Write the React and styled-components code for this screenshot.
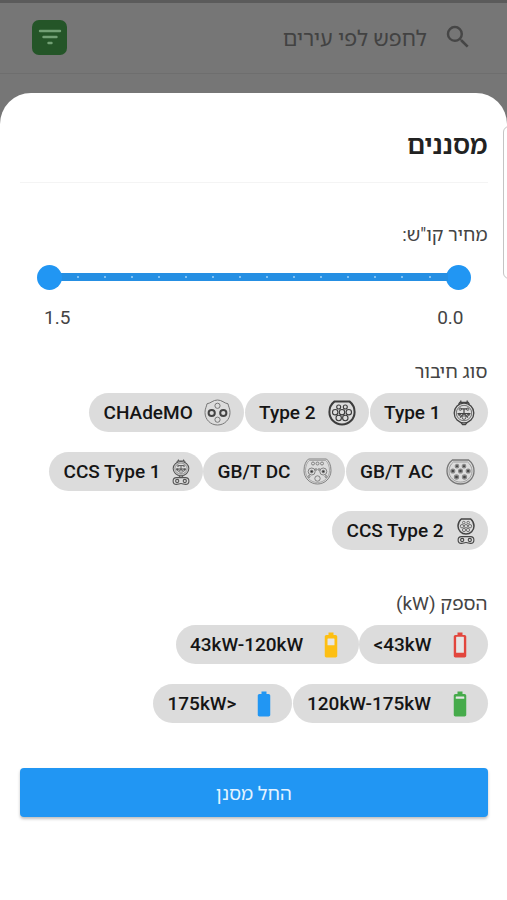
import React from "react";
import styled, { createGlobalStyle } from "styled-components";

const GlobalStyle = createGlobalStyle`
  * {
    box-sizing: border-box;
  }
  body {
    margin: 0;
    background: #767676;
    font-family: Roboto, "Noto Sans Hebrew", "Noto Sans", "Open Sans", sans-serif;
    color: #444;
  }
`;

const ticks = Array.from({ length: 14 }, (_, i) => i);

const Pin = ({ x, y, r = 2.2, fill = "none" }) => (
  <circle cx={x} cy={y} r={r} fill={fill} />
);

const Type1Face = () => (
  <>
    <circle cx="11" cy="14" r="9.8" strokeWidth="1.3" />
    <circle cx="11" cy="14" r="7.7" strokeWidth="0.7" />
    <path d="M5.500 5.500l1.300-2.200h8.400l1.300 2.200M7.800 3.300V1.500M14.200 3.300V1.500M8 23.500l1.600 2h2.800l1.600-2" strokeWidth="1.300" />
    <path d="M7.500 9.800h7M11 9.800v4.700M4.500 14.500h13M11 14.500l-4 4M11 14.500l4 4" strokeWidth="1.200" />
    <g strokeWidth=".8">
      <Pin x={7.3} y={10.2} r={1.2} />
      <Pin x={14.7} y={10.2} r={1.2} />
      <Pin x={6.5} y={15.5} r={1.100} fill="#555" />
      <Pin x={15.5} y={15.5} r={1.100} fill="#555" />
      <Pin x={11} y={18.6} r={1.8} fill="#dcdcdc" />
    </g>
  </>
);

const Type1Icon = () => (
  <svg width="22" height="27" viewBox="0 0 22 27" fill="none" stroke="#444">
    <Type1Face />
  </svg>
);

const Type2Icon = () => (
  <svg width="28" height="26" viewBox="0 0 28 26" fill="none" stroke="#3c3c3c">
    <path d="M6.6 1.4h14.8c3.3 2.6 5.2 6.4 5.2 10.5 0 7-5.6 12.6-12.6 12.6S1.4 18.9 1.4 11.9c0-4.1 1.9-7.9 5.2-10.5z" strokeWidth="2" />
    <g strokeWidth="1.1">
      <Pin x={10.7} y={7} r={2} />
      <Pin x={17.3} y={7} r={2} />
      <Pin x={7.2} y={12.2} r={2.7} />
      <Pin x={14} y={12.2} r={2.7} />
      <Pin x={20.8} y={12.2} r={2.7} />
      <Pin x={10.7} y={18} r={2.7} />
      <Pin x={17.3} y={18} r={2.7} />
    </g>
  </svg>
);

const ChademoIcon = () => (
  <svg width="27" height="27" viewBox="0 0 27 27" fill="none" stroke="#777" strokeWidth="1">
    <path d="M3 4.800C7 4.200 9 1 13.500 1S20 4.200 24 4.800c.5 3 2 4.700 2 8.700C26 20.500 20.500 26 13.500 26S1 20.500 1 13.500c0-4 1.500-5.700 2-8.700z" />
    <Pin x={13.5} y={6.8} r={2.6} />
    <Pin x={13.5} y={20.7} r={2.6} />
    <g stroke="#444" strokeWidth="2">
      <Pin x={7.7} y={14} r={3.1} />
      <Pin x={19.3} y={14} r={3.1} />
    </g>
  </svg>
);

const GbtAcIcon = () => (
  <svg width="29" height="26" viewBox="0 0 29 26" fill="none" stroke="#777">
    <path d="M6.4 1h16.2c3.4 2.6 5.4 6.6 5.4 11 0 7.3-6 13-13.5 13S1 19.3 1 12C1 7.6 3 3.6 6.4 1z" strokeWidth="1.3" />
    <path d="M7.4 3h14.2c2.8 2.2 4.4 5.5 4.4 9.1 0 6.2-5.2 11-11.5 11S3 18.3 3 12.1C3 8.5 4.6 5.2 7.4 3z" strokeWidth=".6" />
    <g strokeWidth="1.300" stroke="#8a8a8a">
      <Pin x={11} y={7.200} r={1.700} fill="#444" />
      <Pin x={18} y={7.200} r={1.700} fill="#444" />
      <Pin x={6.8} y={12} r={1.900} fill="#444" />
      <Pin x={14.5} y={12} r={1.900} fill="#444" />
      <Pin x={22.2} y={12} r={1.900} fill="#444" />
      <Pin x={10.5} y={18} r={2} fill="#444" />
      <Pin x={18.5} y={18} r={2} fill="#444" />
    </g>
  </svg>
);

const GbtDcIcon = () => (
  <svg width="29" height="27" viewBox="0 0 29 27" fill="none" stroke="#777" strokeWidth=".9">
    <path d="M5.5 1h18c2.5 2 4.500 6 4.500 11.500C28 20 22 26 14.500 26S1 20 1 12.500C1 7 3 3 5.500 1z" />
    <path d="M6.3 2.5h16.400c2.300 2 3.800 5.500 3.800 10 0 6.600-5.300 12-12 12s-12-5.400-12-12c0-4.500 1.500-8 3.800-10z" strokeWidth=".5" />
    <Pin x={10} y={5.5} r={1.5} />
    <Pin x={14.5} y={5.5} r={1.5} />
    <Pin x={19} y={5.5} r={1.5} />
    <Pin x={8.7} y={13.5} r={3.5} />
    <Pin x={20.3} y={13.5} r={3.5} />
    <Pin x={8.7} y={13.5} r={1.3} fill="#333" />
    <Pin x={20.3} y={13.5} r={1.3} fill="#333" />
    <Pin x={14.5} y={20.5} r={2.7} />
    <Pin x={6} y={18.5} r={1} />
    <Pin x={23} y={18.5} r={1} />
    <Pin x={13} y={11.5} r={.9} />
    <Pin x={16} y={11.5} r={.9} />
  </svg>
);

const CcsPair = () => (
  <g strokeWidth="1.1">
    <path d="M4.500 18.600h9a3.400 3.400 0 0 1 0 6.800c-1.800 0-2.700-.9-4.500-.9s-2.700.9-4.500.9a3.400 3.400 0 0 1 0-6.800z" />
    <Pin x={5.2} y={22} r={1.6} />
    <Pin x={12.8} y={22} r={1.6} />
  </g>
);

const Ccs1Icon = () => (
  <svg width="18" height="26" viewBox="0 0 18 26" fill="none" stroke="#555">
    <g transform="translate(.2 -.5) scale(.8 .72)">
      <Type1Face />
    </g>
    <CcsPair />
  </svg>
);

const Ccs2Icon = () => (
  <svg width="18" height="26" viewBox="0 0 18 26" fill="none" stroke="#444">
    <path d="M4.300 1h9.400c2 1.700 3.300 4.200 3.300 7a8 8 0 0 1-16 0c0-2.800 1.300-5.300 3.300-7z" strokeWidth="1.500" />
    <g strokeWidth=".9" stroke="#666">
      <Pin x={6.8} y={4.6} r={1.3} />
      <Pin x={11.2} y={4.6} r={1.3} />
      <Pin x={5} y={8.2} r={1.7} />
      <Pin x={9} y={8.2} r={1.7} />
      <Pin x={13} y={8.2} r={1.7} />
      <Pin x={7} y={12} r={1.6} />
      <Pin x={11} y={12} r={1.6} />
    </g>
    <CcsPair />
  </svg>
);

const batteryShape =
  "M15.67 4H14V2h-4v2H8.33C7.6 4 7 4.6 7 5.33v15.33C7 21.4 7.6 22 8.33 22h7.33c.74 0 1.34-.6 1.34-1.33V5.33C17 4.6 16.4 4 15.67 4z";

// hollow is the empty part of the cell: [y, height, width]
const BatteryIcon = ({ color, hollow }) => (
  <svg width="30" height="30" viewBox="0 0 24 24">
    <path d={batteryShape} fill={color} />
    {hollow && (
      <rect
        x={12 - hollow[2] / 2}
        y={hollow[0]}
        width={hollow[2]}
        height={hollow[1]}
        rx="0.3"
        fill="#e6e6e6"
      />
    )}
  </svg>
);

const connectors = [
  { label: "Type 1", width: 118, icon: <Type1Icon /> },
  { label: "Type 2", width: 124.5, icon: <Type2Icon /> },
  { label: "CHAdeMO", width: 155, icon: <ChademoIcon /> },
  { label: "GB/T AC", width: 142, icon: <GbtAcIcon /> },
  { label: "GB/T DC", width: 142, icon: <GbtDcIcon /> },
  { label: "CCS Type 1", width: 153.5, icon: <Ccs1Icon /> },
  { label: "CCS Type 2", width: 155.5, icon: <Ccs2Icon /> },
];

const powers = [
  { label: "<43kW", width: 128.5, icon: <BatteryIcon color="#e2463d" hollow={[5.4, 12.8, 6.2]} /> },
  { label: "43kW-120kW", width: 183, icon: <BatteryIcon color="#fdbf13" hollow={[6.8, 5.4, 5.6]} /> },
  { label: "120kW-175kW", width: 195, icon: <BatteryIcon color="#46ab4b" hollow={[6, 1.8, 6.8]} /> },
  { label: "175kW>", width: 139, icon: <BatteryIcon color="#2196f3" /> },
];

const ChipList = ({ items }) => (
  <Chips>
    {items.map((item) => (
      <Chip key={item.label} $width={item.width}>
        <span>{item.label}</span>
        {item.icon}
      </Chip>
    ))}
  </Chips>
);

const App = () => {
  return (
    <>
      <GlobalStyle />
      <Screen>
        <TopBar>
          <svg width="30" height="30" viewBox="0 0 24 24" fill="#464646">
            <path d="M15.5 14h-.79l-.28-.27A6.47 6.47 0 0 0 16 9.5 6.5 6.5 0 1 0 9.5 16c1.61 0 3.09-.59 4.23-1.57l.27.28v.79l5 4.99L20.49 19l-4.99-5zm-6 0C7.01 14 5 11.99 5 9.5S7.01 5 9.5 5 14 7.01 14 9.5 11.99 14 9.5 14z" />
          </svg>
          <SearchText>לחפש לפי עירים</SearchText>
          <FilterButton>
            <svg width="24" height="18" viewBox="0 0 24 18" stroke="#72a075" strokeWidth="2.4" strokeLinecap="round">
              <path d="M2 3h20M5.5 9h13M10.500 15h3" />
            </svg>
          </FilterButton>
        </TopBar>
        <Sheet>
          <Title>מסננים</Title>
          <Label $height={48} $top={28} $size={18.6}>מחיר קו"ש:</Label>
          <Slider>
            <Thumb />
            <Track>
              {ticks.map((tick) => (
                <Tick key={tick} />
              ))}
            </Track>
            <Thumb />
          </Slider>
          <Range>
            <span>0.0</span>
            <span>1.5</span>
          </Range>
          <Label $height={45} $top={18}>סוג חיבור</Label>
          <ChipList items={connectors} />
          <Label $height={45} $top={30}>הספק (kW)</Label>
          <ChipList items={powers} />
          <ApplyButton type="button">החל מסנן</ApplyButton>
        </Sheet>
        <SideHandle />
      </Screen>
    </>
  );
};

const Screen = styled.div`
  position: relative;
  width: 507px;
  height: 900px;
  overflow: hidden;
  direction: rtl;
  background: #767676;
  border-top: 3px solid #5b5b5b;
`;

const TopBar = styled.header`
  display: flex;
  align-items: center;
  height: 71px;
  padding: 0 34px 2px 32px;
  border-bottom: 1px solid #6e6e6e;
`;

const SearchText = styled.span`
  flex: 1;
  margin-right: 16px;
  font-size: 21.4px;
  color: #424242;
`;

const FilterButton = styled.div`
  display: flex;
  align-items: center;
  justify-content: center;
  width: 35px;
  height: 35px;
  border-radius: 7px;
  background: #245528;
`;

const Sheet = styled.main`
  display: flex;
  flex-direction: column;
  height: 808px;
  margin-top: 18.5px;
  padding: 0 19.5px 0 20px;
  border-radius: 31px 31px 0 0;
  background: #fff;
`;

const Title = styled.h1`
  height: 90px;
  margin: 0;
  padding-top: 13px;
  border-bottom: 1px solid #f4f4f4;
  font-size: 26px;
  font-weight: 600;
  line-height: 79px;
  color: #222;
`;

const Label = styled.div`
  height: ${(props) => props.$height}px;
  margin-top: ${(props) => props.$top}px;
  font-size: ${(props) => props.$size || 19}px;
  line-height: 48px;
`;

const Slider = styled.div`
  display: flex;
  align-items: center;
  height: 26px;
  margin-top: 5.5px;
  padding: 0 17px;
`;

const Thumb = styled.div`
  flex: none;
  width: 25px;
  height: 25px;
  border-radius: 50%;
  background: #2196f3;
`;

const Track = styled.div`
  display: flex;
  flex: 1;
  align-items: center;
  justify-content: space-between;
  height: 8px;
  margin: 0 -2px;
  padding: 0 17px;
  background: #258fe3;
`;

const Tick = styled.i`
  width: 2px;
  height: 2px;
  border-radius: 50%;
  background: #9fd2fa;
`;

const Range = styled.div`
  display: flex;
  justify-content: space-between;
  height: 24px;
  margin-top: 16px;
  padding: 0 24px;
  font-size: 19px;
  line-height: 24px;
`;

const Chips = styled.div`
  display: flex;
  flex-wrap: wrap;
  gap: 20px 0.5px;
`;

const Chip = styled.div`
  display: flex;
  align-items: center;
  justify-content: space-between;
  direction: ltr;
  width: ${(props) => props.$width}px;
  height: 39px;
  padding: 0 13px 0 14.5px;
  border-radius: 20px;
  background: #dcdcdc;
  font-size: 19px;
  font-weight: 500;
  white-space: nowrap;
  color: #151515;
`;

const ApplyButton = styled.button`
  height: 49px;
  margin-top: 45px;
  border: 0;
  border-radius: 4px;
  background: #2196f3;
  box-shadow: 0 2px 3px rgba(0, 0, 0, 0.25);
  font-family: inherit;
  font-size: 18.8px;
  color: #e3f3ff;
`;

const SideHandle = styled.div`
  position: absolute;
  top: 123px;
  right: -8px;
  width: 12px;
  height: 153px;
  border: 1px solid #c4c4c4;
  border-radius: 6px;
  background: #fff;
`;

export default App;
